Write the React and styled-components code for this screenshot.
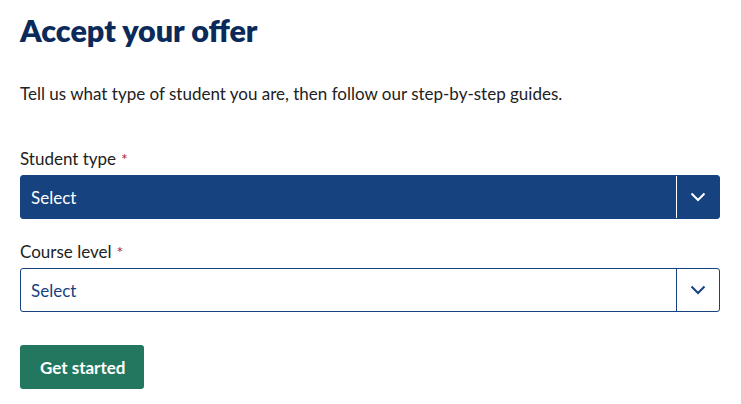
import React from 'react';
import styled, {createGlobalStyle} from 'styled-components';

const GlobalStyle = createGlobalStyle`
  body {
    margin: 0;
    background: #fff;
    font-family: Lato, "Open Sans", sans-serif;
  }
`

const Page = styled.main`
  padding: 10px 21px 0 20px;
`

const Heading = styled.h1`
  margin: 0;
  font-size: 30.5px;
  line-height: 40px;
  font-weight: 800;
  color: #0b2a5a;
`

const Intro = styled.p`
  margin: 32px 0 0;
  font-size: 17px;
  line-height: 24px;
  color: #222;
`

const Form = styled.form`
  margin-top: 43px;
  display: flex;
  flex-direction: column;
  gap: 23px;
`

const Field = styled.div`
  display: flex;
  flex-direction: column;
  gap: 6px;
`

const Label = styled.label`
  font-size: 17px;
  line-height: 20px;
  color: #222;

  span {
    color: #b12a2a;
    margin-left: 5px;
    font-size: 16px;
  }
`

const SelectBox = styled.div`
  display: flex;
  height: 44px;
  border: 1px solid #16427f;
  border-radius: 3px;
  background: ${p => p.$filled ? '#16427f' : '#fff'};
  color: ${p => p.$filled ? '#fff' : '#16427f'};
  box-sizing: border-box;
  font-size: 17px;
`

const Value = styled.div`
  flex: 1;
  display: flex;
  align-items: center;
  padding-left: 10px;
`

const Toggle = styled.div`
  width: 42px;
  display: flex;
  align-items: center;
  justify-content: center;
  border-left: 1px solid ${p => p.$filled ? '#fff' : '#16427f'};
`

const Button = styled.button`
  margin-top: 10px;
  align-self: flex-start;
  height: 44px;
  padding: 0 19px 0 20px;
  border: none;
  border-radius: 3px;
  background: #23775f;
  color: #fff;
  font-family: inherit;
  font-size: 17px;
  font-weight: 700;
`

const Chevron = () => (
  <svg width="16" height="10" viewBox="0 0 16 10" fill="none">
    <path d="M1.5 1.5L8 8L14.5 1.5" stroke="currentColor" strokeWidth="2" />
  </svg>
)

const Select = ({filled}) => (
  <SelectBox $filled={filled}>
    <Value>Select</Value>
    <Toggle $filled={filled}><Chevron /></Toggle>
  </SelectBox>
)

const App = () => (
  <Page>
    <GlobalStyle />
    <Heading>Accept your offer</Heading>
    <Intro>Tell us what type of student you are, then follow our step-by-step guides.</Intro>
    <Form>
      <Field>
        <Label>Student type<span>*</span></Label>
        <Select filled />
      </Field>
      <Field>
        <Label>Course level<span>*</span></Label>
        <Select />
      </Field>
      <Button type="button">Get started</Button>
    </Form>
  </Page>
)

export default App;
